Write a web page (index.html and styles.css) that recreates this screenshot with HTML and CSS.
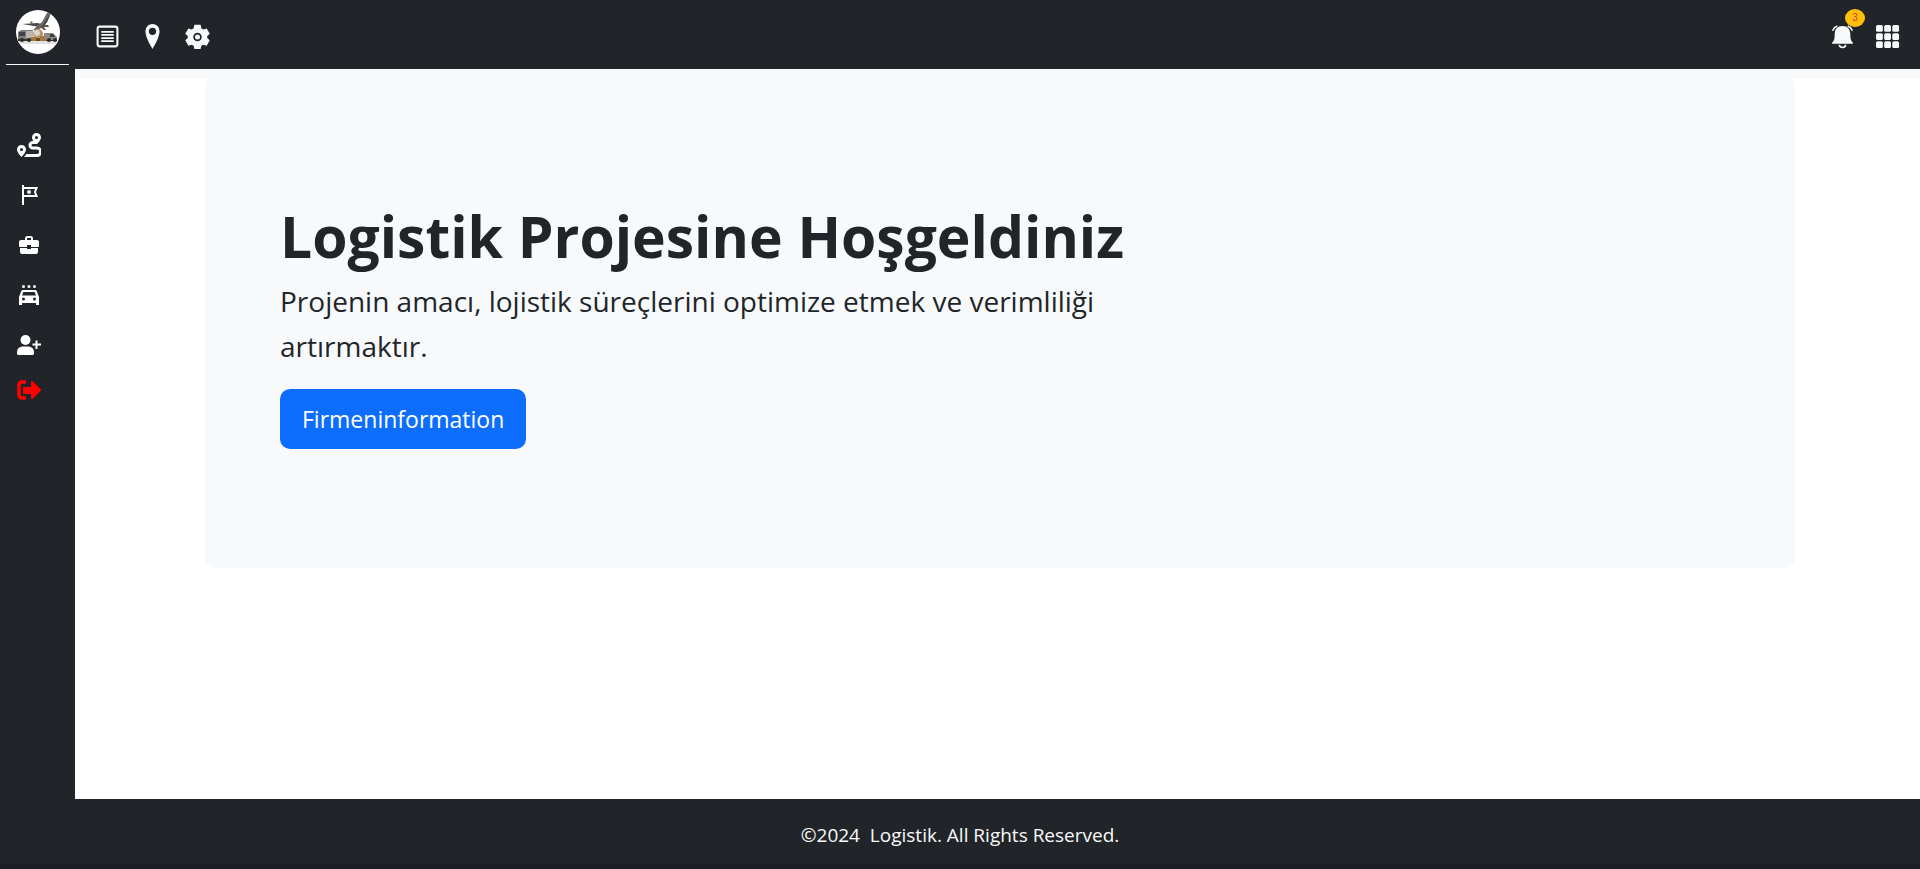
FILE: index.html
```html
<!DOCTYPE html>
<html lang="tr">
<head>
<meta charset="utf-8">
<title>Logistik</title>
<link rel="stylesheet" href="styles.css">
</head>
<body>
<div class="app">
  <aside class="sidebar">
    <a class="logo" href="#" aria-label="Logistik">
      <svg viewBox="0 0 44 44" width="44" height="44">
        <defs><clipPath id="disc"><circle cx="22" cy="22" r="22"/></clipPath></defs>
        <g clip-path="url(#disc)">
          <rect width="44" height="44" fill="#fff"/>
          <path d="M2 31h40v3H2z" fill="#e2e0dd"/>
          <path d="M6 14l16-1 5 2-3 2z" fill="#4b4947"/>
          <path d="M31 3l4 0-4 9-3 4-6 4-5 0 4-4 5-4z" fill="#6b6865"/>
          <path d="M35 3l-4 9-3 4-2 1 5-8z" fill="#3d3b39"/>
          <path d="M26 15l6 0 1 2-5 0 2 3-2 0-4-3z" fill="#565350"/>
          <path d="M14 12l2-1 1 3-2 0z" fill="#77736f"/>
          <path d="M2 22l3-2h12v11H2z" fill="#7d7b77"/>
          <path d="M3 22h6v4H3z" fill="#3f4143"/>
          <path d="M10 21h7v7h-7z" fill="#b9b7b1"/>
          <path d="M28 23h9l4 4v4H28z" fill="#8d8a84"/>
          <path d="M34 24h3l2 3h-5z" fill="#383b3e"/>
          <circle cx="22" cy="24" r="5" fill="#b69472"/>
          <circle cx="21" cy="23" r="3" fill="#ded4c8"/>
          <path d="M15 27h5v4h-5zM24 26h5v5h-5z" fill="#a87837"/>
          <path d="M20 28h4v3h-4z" fill="#684a2c"/>
          <path d="M2 29h13v2H2zM30 30h11v1H30z" fill="#393735"/>
          <circle cx="6" cy="30" r="2" fill="#292929"/><circle cx="13" cy="30" r="2" fill="#292929"/>
          <circle cx="33" cy="30" r="2" fill="#292929"/><circle cx="39" cy="30" r="2" fill="#292929"/>
        </g>
      </svg>
    </a>
    <nav class="side-nav" aria-label="Menü">
      <a href="#" aria-label="Rota"><svg class="icon-wide" viewBox="0 0 24 24"><path fill="currentColor" fill-rule="evenodd" d="M19.500 0a4.500 4.500 0 0 1 4.500 4.500C24 6.500 21.500 9.500 20 11h-4.200a1.300 1.300 0 0 0 0 2.600H20a5.200 5.200 0 0 1 0 10.400H7c1-1 1.700-2 2.300-3H20a2.200 2.200 0 0 0 0-4.400h-4.200a4.300 4.300 0 0 1 0-8.600h.6C15.500 6.800 15 5.500 15 4.500A4.500 4.500 0 0 1 19.500 0zm0 3a1.500 1.500 0 1 0 0 3 1.500 1.500 0 0 0 0-3zM4.500 12A4.500 4.500 0 0 1 9 16.500C9 19 6 22.500 4.500 24 3 22.500 0 19 0 16.500A4.500 4.500 0 0 1 4.500 12zm0 3a1.500 1.500 0 1 0 0 3 1.500 1.500 0 0 0 0-3z"/></svg></a>
      <a href="#" aria-label="Turlar"><svg class="icon-square" viewBox="0 0 20 20"><path fill="currentColor" fill-rule="evenodd" d="M3 0h2v2h14l-2 5 2 5H5v8H3zM5 4v6h11l-1-3 1-3z"/><circle cx="10" cy="7" r="2" fill="currentColor"/></svg></a>
      <a href="#" aria-label="İşler"><svg class="icon-square" viewBox="0 0 20 20"><path fill="currentColor" fill-rule="evenodd" d="M6 5V3.500A2.500 2.500 0 0 1 8.500 1h3A2.500 2.500 0 0 1 14 3.500V5h4a2 2 0 0 1 2 2v4a1 1 0 0 1-1 1h-7v-2H8v2H1a1 1 0 0 1-1-1V7a2 2 0 0 1 2-2zm2 0h4V3H8zM1 13h7v1h4v-1h7v4a2 2 0 0 1-2 2H3a2 2 0 0 1-2-2z"/></svg></a>
      <a href="#" aria-label="Araçlar"><svg class="icon-square" viewBox="0 0 20 20"><g fill="currentColor"><circle cx="4.500" cy="1.500" r="1.500"/><circle cx="10" cy="1.500" r="1.500"/><circle cx="15.500" cy="1.500" r="1.500"/><path fill-rule="evenodd" d="M4 5h12c1 0 1.500.5 1.800 1.300L20 12v7.500a.7.700 0 0 1-.7.700h-1.600a.7.700 0 0 1-.7-.7V18H3v1.500a.7.700 0 0 1-.7.700H.7a.7.700 0 0 1-.7-.7V12l2.200-5.700C2.500 5.500 3 5 4 5zm.3 2L3 10.500h14L15.700 7zM4.500 12.500a1.500 1.500 0 1 0 0 3 1.500 1.500 0 0 0 0-3zm11 0a1.500 1.500 0 1 0 0 3 1.500 1.500 0 0 0 0-3z"/></g></svg></a>
      <a href="#" aria-label="Kullanıcı ekle"><svg class="icon-wide" viewBox="0 0 24 24"><g fill="currentColor"><circle cx="8.500" cy="7" r="5"/><path d="M5.500 13.500h6a5.500 5.500 0 0 1 5.500 5.500v1.500c0 .8-.7 1.500-1.500 1.500h-14A1.500 1.500 0 0 1 0 20.500V19a5.500 5.500 0 0 1 5.500-5.500zM18.500 7.500h2v3h3.500v2h-3.500V16h-2v-3.500h-3v-2h3z"/></g></svg></a>
      <a class="logout" href="#" aria-label="Çıkış"><svg class="icon-wide" viewBox="0 0 24 24"><path d="M9 4H5a3 3 0 0 0-3 3v10a3 3 0 0 0 3 3h4" fill="none" stroke="currentColor" stroke-width="3.600"/><path fill="currentColor" d="M6 9h8V4a1 1 0 0 1 1.700-.7l8 8a1 1 0 0 1 0 1.400l-8 8A1 1 0 0 1 14 20v-4H6z"/></svg></a>
    </nav>
  </aside>
  <header class="topbar">
    <nav class="top-nav" aria-label="Kısayollar">
      <a href="#" aria-label="Liste"><svg viewBox="0 0 24 24"><g fill="none" stroke="currentColor" stroke-width="2"><rect x="2.500" y="2.500" width="19" height="19" rx="2"/><path d="M6 7.500h12M6 10.500h12M6 13.500h12M6 16.500h12" stroke-width="1.600"/></g></svg></a>
      <a href="#" aria-label="Konum"><svg viewBox="0 0 24 24"><path fill="currentColor" fill-rule="evenodd" d="M12 0a6.800 6.800 0 0 1 6.800 6.800C18.800 12 15 19 12 24 9 19 5.200 12 5.200 6.800A6.800 6.800 0 0 1 12 0zm0 3.500a3.500 3.500 0 1 0 0 7 3.500 3.500 0 0 0 0-7z"/></svg></a>
      <a href="#" aria-label="Ayarlar"><svg viewBox="0 0 24 24"><path fill="currentColor" fill-rule="evenodd" d="M9 .8h6l.7 3.300 1.900 1.100 3.200-1 3 5.100L21.300 11.500v2l2.500 2.200-3 5.100-3.200-1-1.900 1.100-.7 3.100H9l-.7-3.100-1.900-1.100-3.200 1-3-5.100 2.500-2.200v-2L.2 9.300l3-5.100 3.200 1 1.900-1.100zM12 8.300a4.100 4.100 0 1 0 0 8.200 4.100 4.100 0 0 0 0-8.200z"/><circle cx="12" cy="12.400" r="2.400" fill="currentColor"/></svg></a>
    </nav>
    <div class="top-nav">
      <button type="button" aria-label="Bildirimler">
        <svg viewBox="0 0 24 24"><path fill="currentColor" d="M12 2c5 0 7.500 3.200 7.500 8 0 4 .5 6 2.500 8v1H2v-1c2-2 2.500-4 2.500-8C4.500 5.200 7 2 12 2z"/><path fill="none" stroke="currentColor" stroke-width="1.500" d="M9 20a3 2.500 0 0 0 6 0M2.500 6.500Q4 3 7 2M21.500 6.500Q20 3 17 2"/></svg>
        <span class="badge">3</span>
      </button>
      <button type="button" aria-label="Uygulamalar"><svg viewBox="0 0 24 24"><g fill="currentColor"><rect x="1" y="1" width="6.500" height="6.500" rx="1.500"/><rect x="8.800" y="1" width="6.500" height="6.500" rx="1.500"/><rect x="16.600" y="1" width="6.500" height="6.500" rx="1.500"/><rect x="1" y="8.800" width="6.500" height="6.500" rx="1.500"/><rect x="8.800" y="8.800" width="6.500" height="6.500" rx="1.500"/><rect x="16.600" y="8.800" width="6.500" height="6.500" rx="1.500"/><rect x="1" y="16.600" width="6.500" height="6.500" rx="1.500"/><rect x="8.800" y="16.600" width="6.500" height="6.500" rx="1.500"/><rect x="16.600" y="16.600" width="6.500" height="6.500" rx="1.500"/></g></svg></button>
    </div>
  </header>
  <main class="content">
    <div class="strip"></div>
    <section class="hero">
      <h1>Logistik Projesine Hoşgeldiniz</h1>
      <p>Projenin amacı, lojistik süreçlerini optimize etmek ve verimliliği artırmaktır.</p>
      <button type="button" class="primary">Firmeninformation</button>
    </section>
  </main>
  <footer class="footer">©2024 &nbsp;Logistik. All Rights Reserved.</footer>
</div>
</body>
</html>
```
FILE: styles.css
```css
* { box-sizing: border-box; }
body {
  margin: 0;
  color: #212529;
  background: #fff;
  font-family: "Segoe UI", "Open Sans", "Noto Sans", sans-serif;
}
.app {
  display: grid;
  grid-template-columns: 75px 1fr;
  grid-template-rows: auto 1fr auto;
  min-height: 100vh;
}
svg { display: block; }
a, button { color: inherit; }
.sidebar {
  grid-row: 1 / 3;
  padding: 10px 6px;
  color: #fff;
  background: #212529;
}
.logo {
  display: flex;
  justify-content: center;
  padding-bottom: 10px;
  border-bottom: 1px solid #f8f9fa;
}
.side-nav {
  display: flex;
  flex-direction: column;
  align-items: flex-start;
  gap: 25px;
  padding: 67px 10px;
}
.side-nav a {
  display: flex;
  justify-content: center;
  align-items: center;
  width: 25px;
  height: 25px;
}
.icon-wide { width: 24px; height: 24px; }
.icon-square { width: 20px; height: 20px; }
.side-nav .logout { margin-top: -5px; color: #f00; }
.topbar {
  display: flex;
  justify-content: space-between;
  align-items: center;
  height: 69px;
  padding: 4px 20px 0;
  color: #f8f9fa;
  background: #212529;
}
.top-nav { display: flex; gap: 20px; }
.top-nav a, .top-nav button {
  position: relative;
  width: 25px;
  height: 25px;
  padding: 0;
  border: 0;
  background: none;
}
.badge {
  position: absolute;
  top: -15px;
  right: -10px;
  width: 20px;
  border-radius: 50%;
  color: #dc3545;
  background: #ffc107;
  font-size: 10px;
  line-height: 18px;
  text-align: center;
}
.strip { height: 10px; background: #f8f9fb; }
.hero {
  margin: -4px 125px 0 130px;
  padding: 126px 75px 119px;
  border-radius: 10px;
  background: #f8f9fb;
}
h1 {
  margin: 0 0 7px;
  font-size: 57px;
  line-height: 71px;
  font-weight: 700;
}
p {
  max-width: 860px;
  margin: 0 0 20px;
  font-size: 28px;
  line-height: 45px;
  font-weight: 400;
}
.primary {
  padding: 10px 22px;
  border: 0;
  border-radius: 10px;
  color: #fff;
  background: #0d6efd;
  font-family: inherit;
  font-size: 23px;
  line-height: 40px;
}
.footer {
  grid-column: 1 / 3;
  padding: 24px 0 16px;
  border-bottom: 5px solid #1c1f23;
  color: #f8f9fa;
  background: #212529;
  font-size: 19px;
  line-height: 25px;
  text-align: center;
}
```
